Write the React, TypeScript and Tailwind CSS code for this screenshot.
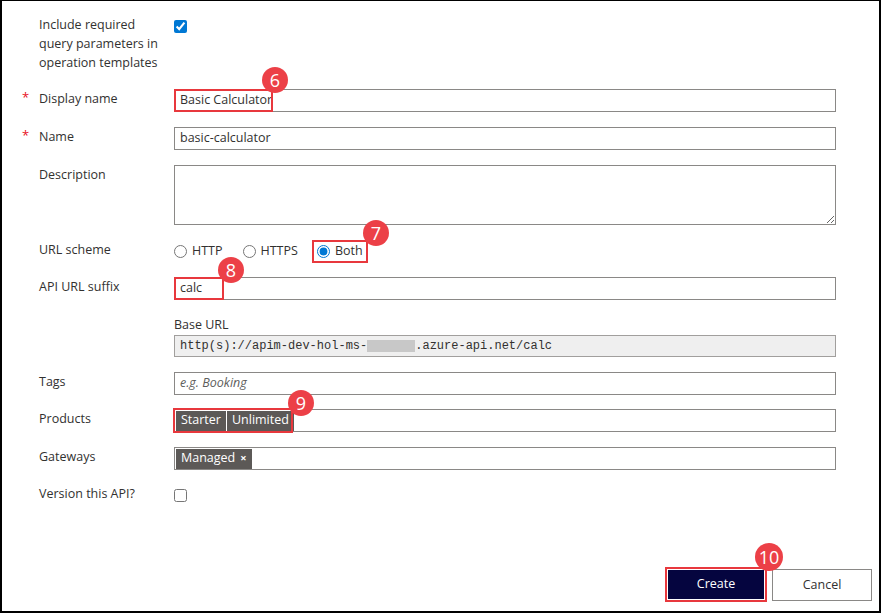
const RED = "border-[#e8383d]";

const Badge = ({ n, className }: { n: string; className: string }) => (
  <div
    className={`absolute z-10 flex h-[26px] w-[26px] items-center justify-center rounded-full bg-[#ec4047] text-[18px] leading-none text-white ${className}`}
  >
    {n}
  </div>
);

interface RowProps {
  label: React.ReactNode;
  required?: boolean;
  className?: string;
  children?: React.ReactNode;
}

const Row = ({ label, required, className = "", children }: RowProps) => (
  <div className={`flex items-start ${className}`}>
    <div className="w-[17px] text-[13px] leading-[17px] text-[#e81123]">
      {required ? "*" : ""}
    </div>
    <div className="w-[135px] text-[12.5px] leading-[19px] text-[#323130]">{label}</div>
    <div className="relative w-[662px]">{children}</div>
  </div>
);

const TextBox = ({ children }: { children?: React.ReactNode }) => (
  <div className="flex h-[23px] items-center border border-[#8a8886] bg-white pl-[5px] text-[12.5px] text-[#323130]">
    {children}
  </div>
);

const Radio = ({ label, checked }: { label: string; checked?: boolean }) => (
  <label className="flex items-center gap-[5px] text-[12.5px] text-[#323130]">
    <input
      type="radio"
      name="scheme"
      defaultChecked={checked}
      className="m-0 h-[13px] w-[13px] accent-[#0078d4]"
    />
    {label}
  </label>
);

const Chip = ({ children }: { children: React.ReactNode }) => (
  <span className="flex h-[20px] items-center bg-[#5c5957] px-[5px] text-[12.5px] text-white">
    {children}
  </span>
);

export default function App() {
  return (
    <div
      className="flex h-[613px] w-[881px] flex-col border-x-2 border-t border-b-2 border-black bg-white pl-[20px] pt-[14px]"
      style={{ fontFamily: '"Open Sans", "Noto Sans", sans-serif' }}
    >
      <Row label={<>Include required<br />query parameters in<br />operation templates</>}>
        <input
          type="checkbox"
          defaultChecked
          className="m-0 mt-[3px] h-[13px] w-[13px] accent-[#0078d4]"
        />
      </Row>

      <Row label="Display name" required className="mt-[17px]">
        <TextBox>Basic Calculator</TextBox>
        <div className={`absolute left-0 top-0 h-[23px] w-[99px] border-2 ${RED}`} />
        <Badge n="6" className="left-[88px] top-[-22px]" />
      </Row>

      <Row label="Name" required className="mt-[15px]">
        <TextBox>basic-calculator</TextBox>
      </Row>

      <Row label="Description" className="mt-[15px]">
        <textarea className="block h-[60px] w-full border border-[#8a8886] bg-white outline-none" />
      </Row>

      <Row label="URL scheme" className="mt-[15px]">
        <div className="flex h-[22px] items-center">
          <Radio label="HTTP" />
          <div className="ml-[20px]">
            <Radio label="HTTPS" />
          </div>
          <div className={`ml-[14px] flex h-[23px] items-center border-2 px-[3px] ${RED}`}>
            <Radio label="Both" checked />
          </div>
        </div>
        <Badge n="7" className="left-[189px] top-[-20px]" />
      </Row>

      <Row label="API URL suffix" className="mt-[15px]">
        <TextBox>calc</TextBox>
        <div className={`absolute left-0 top-0 h-[23px] w-[50px] border-2 ${RED}`} />
        <Badge n="8" className="left-[44px] top-[-20px]" />
      </Row>

      <Row label="" className="mt-[15px]">
        <div className="text-[12.5px] leading-[19px] text-[#323130]">Base URL</div>
        <div
          className="mt-[1px] flex h-[22px] items-center border border-[#a19f9d] bg-[#efefef] pl-[5px] text-[12px] text-[#323130]"
          style={{ fontFamily: '"Liberation Mono", monospace' }}
        >
          http(s)://apim-dev-hol-ms-
          <span className="inline-block h-[12px] w-[48px] bg-[#c8c8c8]" />
          .azure-api.net/calc
        </div>
      </Row>

      <Row label="Tags" className="mt-[15px]">
        <TextBox>
          <span className="italic text-[#605e5c]">e.g. Booking</span>
        </TextBox>
      </Row>

      <Row label="Products" className="mt-[14px]">
        <div className="flex h-[23px] items-center border border-[#8a8886] bg-white pl-[1px]">
          <Chip>Starter</Chip>
          <span className="h-[20px] w-[1px] bg-white" />
          <Chip>Unlimited</Chip>
        </div>
        <div className={`absolute left-[-1px] top-[-1px] h-[25px] w-[120px] border-2 ${RED}`} />
        <Badge n="9" className="left-[114px] top-[-19px]" />
      </Row>

      <Row label="Gateways" className="mt-[15px]">
        <div className="flex h-[23px] items-center border border-[#8a8886] bg-white pl-[1px]">
          <Chip>
            Managed <span className="ml-[5px] text-[11px] font-bold">×</span>
          </Chip>
        </div>
      </Row>

      <Row label="Version this API?" className="mt-[14px]">
        <input type="checkbox" className="m-0 mt-[4px] h-[13px] w-[13px]" />
      </Row>

      <div className="mt-auto flex items-start justify-end gap-[8px] pb-[10px] pr-[7px]">
        <div className="relative mt-[1px]">
          <button className="block h-[29px] w-[96px] bg-[#05053f] text-[12.5px] text-white outline-2 outline-offset-1 outline-[#e8383d]">
            Create
          </button>
          <Badge n="10" className="left-[87px] top-[-27px] h-[28px] w-[28px]" />
        </div>
        <button className="h-[32px] w-[100px] border border-[#8a8886] bg-white text-[12.5px] text-[#323130]">
          Cancel
        </button>
      </div>
    </div>
  );
}
